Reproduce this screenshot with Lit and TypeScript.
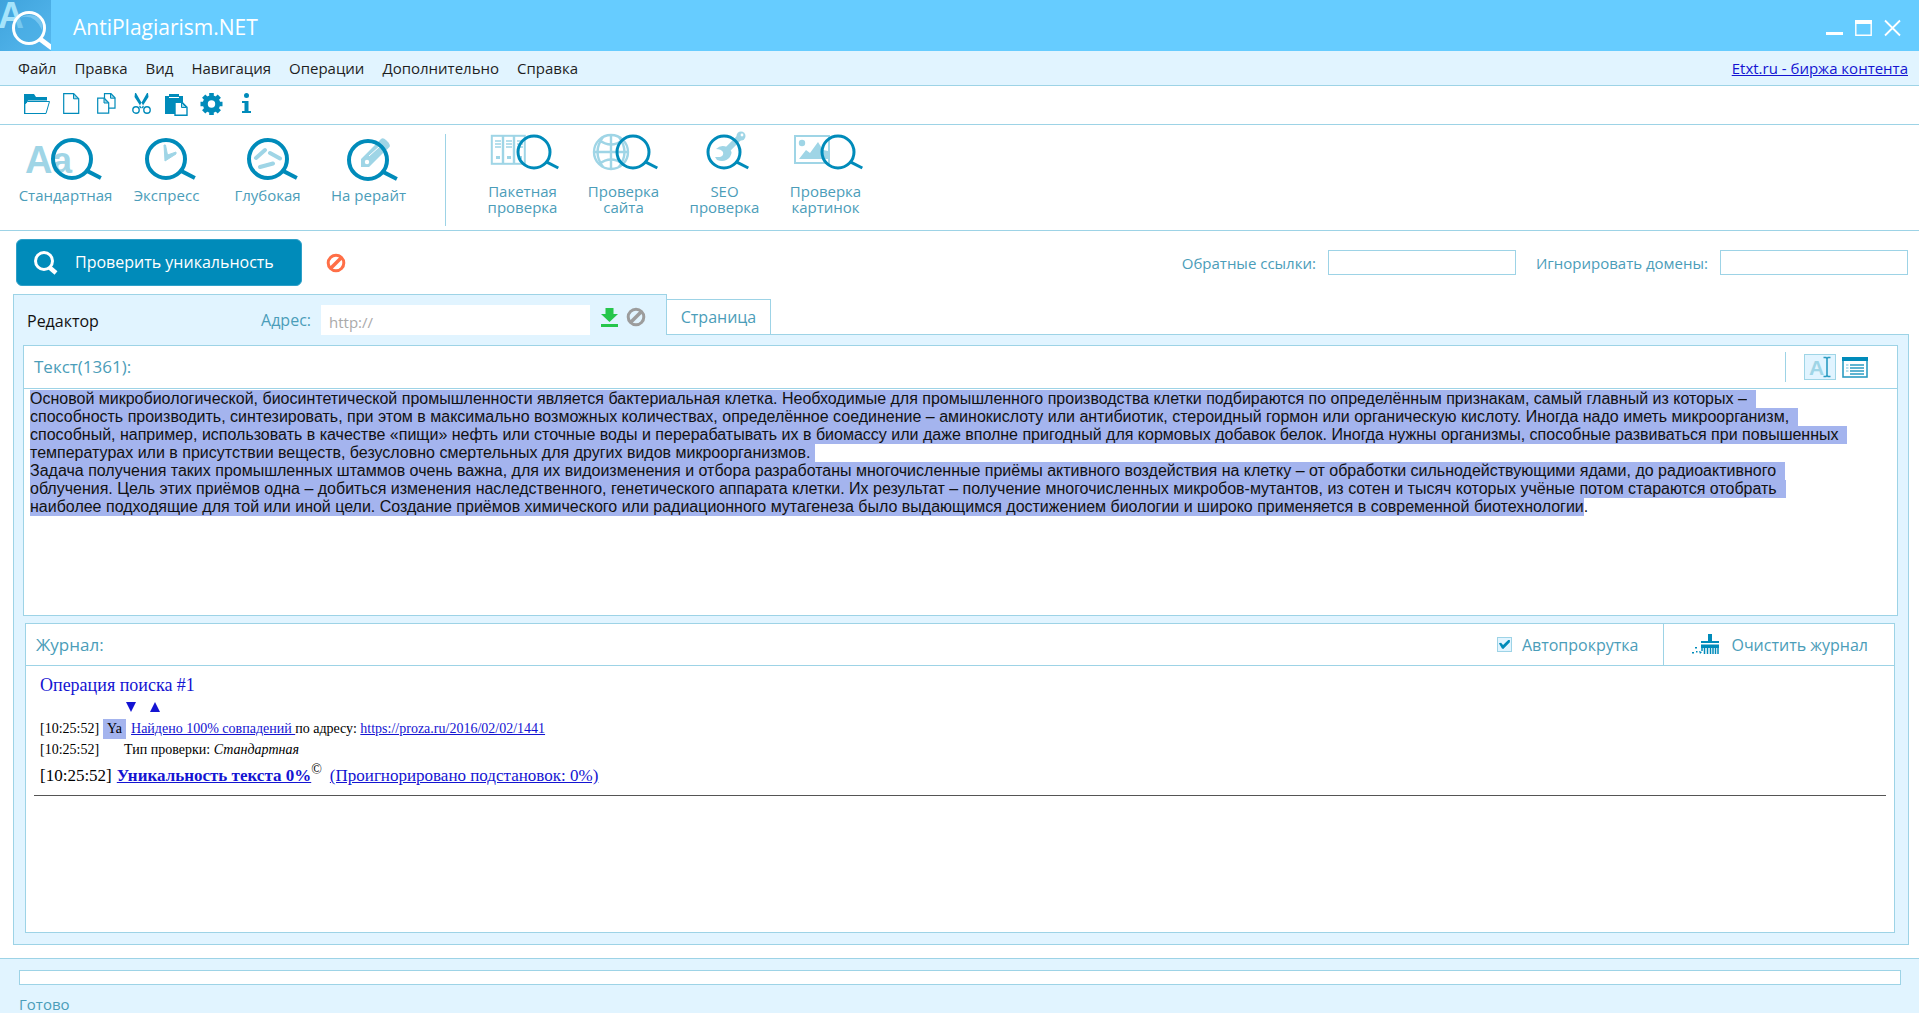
import { LitElement, html, css, svg, TemplateResult } from "lit";
import { customElement, query, state } from "lit/decorators.js";

const DEEP = "#008bba";
const PALE = "#9fd5e6";

const MENU = ["Файл", "Правка", "Вид", "Навигация", "Операции", "Дополнительно", "Справка"];

const smallIcon = (label: string, width: number, body: TemplateResult) => ({ label, width, body });

const TOOLS = [
  smallIcon("Открыть", 26, svg`
    <path d="M0 1h10l2 3h11v3.500H4L0 19z" fill=${DEEP}/>
    <path d="M3.500 8.500h22l-3.500 12H.7v-9z" fill="#fff" stroke=${DEEP}/>
    <path d="M0 1h1.200v19.900H0z" fill=${DEEP}/>`),
  smallIcon("Новый", 17, svg`
    <path d="M.7 .7h10l5 5v14.600H.7z" fill="#fff" stroke=${DEEP} stroke-width="1.200"/>
    <path d="M10.500 .8v5h5z" fill=${PALE} stroke=${DEEP}/>`),
  smallIcon("Копировать", 19, svg`
    <path d="M7.500 .7h6.500l4 4v10.500h-10.500z" fill="#fff" stroke=${DEEP} stroke-width="1.200"/>
    <path d="M13.500 .7v4.500h4.500z" fill=${PALE} stroke=${DEEP}/>
    <path d="M.7 5.200h6.500l4.500 4.500v10.500h-11z" fill="#fff" stroke=${DEEP} stroke-width="1.200"/>
    <path d="M7 5.500v4.500h4.500z" fill=${PALE} stroke=${DEEP}/>`),
  smallIcon("Вырезать", 19, svg`
    <path d="M3 0l1 0 8 14-2 1.500L2.500 4zM16 0l-1 0-8 14 2 1.500L16.500 4z" fill=${DEEP}/>
    <circle cx="4" cy="17" r="3.200" fill="#fff" stroke=${DEEP} stroke-width="1.400"/>
    <circle cx="15" cy="17" r="3.200" fill="#fff" stroke=${DEEP} stroke-width="1.400"/>`),
  smallIcon("Вставить", 23, svg`
    <path d="M0 3h4V1h10v2h4v6h-8v12H0z" fill=${DEEP}/>
    <path d="M4 4.500h10" stroke="#fff"/>
    <path d="M10 9.200h7l5 5v8H10z" fill="#fff" stroke=${DEEP} stroke-width="1.400"/>
    <path d="M16.500 9.500v5h5z" fill=${PALE} stroke=${DEEP}/>`),
  smallIcon("Настройки", 23, svg`
    <circle cx="11.500" cy="11" r="6.200" fill="none" stroke=${DEEP} stroke-width="5"/>
    <g stroke=${DEEP} stroke-width="4.600">
      <path d="M11.500 0v3M11.500 19v3M.5 11h3M19.500 11h3M3.700 3.200l2.300 2.300M17 16.500l2.300 2.300M3.700 18.800L6 16.500M17 5.500l2.300-2.300"/>
    </g>`),
  smallIcon("Информация", 9, svg`
    <circle cx="4.500" cy="2.500" r="2.500" fill=${DEEP}/>
    <path d="M0 8h6.500v10H9v2H0v-2h2.500v-8H0z" fill=${DEEP}/>`),
];

const lens = (cx: number, cy: number, r: number, w: number) => svg`
  <circle cx=${cx} cy=${cy} r=${r} fill="none" stroke=${DEEP} stroke-width=${w}/>
  <path d="M${cx + r * 0.74} ${cy + r * 0.6}L${cx + r * 1.52} ${cy + r}" stroke=${DEEP} stroke-width=${w} fill="none"/>`;

const MODES = [
  { label: "Стандартная", body: svg`
    <text x="-1" y="35" font-family="Liberation Sans, sans-serif" font-weight="700" font-size="38" fill=${PALE}>A</text>
    <text x="26" y="35" font-family="Liberation Sans, sans-serif" font-weight="700" font-size="36" fill=${PALE}>a</text>
    ${lens(46, 21, 19, 4)}` },
  { label: "Экспресс", body: svg`
    <path d="M37 7h1.500l2 10 8.500-3v2L38 23z" fill=${PALE} stroke=${PALE}/>${lens(39, 21, 19, 4)}` },
  { label: "Глубокая", body: svg`
    <path d="M28 20l9-8M42 15l10 5.500M32 29l13-3.500" stroke=${PALE} stroke-width="4" stroke-linecap="round"/>${lens(40, 21, 19, 4)}` },
  { label: "На рерайт", body: svg`
    <path d="M32 21L47 6l8 8-15 15h-8zM49 4l3-3q2-2 5 1l2.500 2.500Q62 8 60 9.500L57 12.500z" fill=${PALE}/>
    <circle cx="38" cy="24" r="2.200" fill="#fff"/><path d="M40 18L50 9" stroke="#fff"/>${lens(39, 22, 19, 4)}` },
];

const CHECKS = [
  { label: ["Пакетная", "проверка"], body: svg`
    <rect x="8.800" y="4.800" width="33" height="28" fill="#fff" stroke=${PALE} stroke-width="2"/>
    <path d="M20 5v28M31 5v28" stroke=${PALE} stroke-width="2.400"/>
    <path d="M12 10h6M12 13h6M12 16h6M23 10h6M23 13h6M23 16h6M34 10h6M34 13h6M34 16h6" stroke=${PALE} stroke-width="1.400"/>
    <path d="M13 25h4v3h-4zM24 25h4v3h-4zM35 25h4v3h-4z" fill=${PALE}/>${lens(51, 21, 16, 3)}` },
  { label: ["Проверка", "сайта"], body: svg`
    <g fill="none" stroke=${PALE} stroke-width="2.400">
      <circle cx="27" cy="21" r="17"/><path d="M27 4v34M10 21h34" />
      <path d="M15 9q12 9 24 0M15 33q12-9 24 0M19 6Q8 21 19 36M35 6q11 15 0 30"/>
    </g>${lens(49, 21, 16, 3)}` },
  { label: ["SEO", "проверка"], body: svg`
    <path d="M31 18q5-5 11-2 7 4 3 10-5 6-13 3l-2-3 5 0q4-1 3-5-2-3-7-3z" fill=${PALE}/>
    <path d="M43 18L54 7" stroke=${PALE} stroke-width="6"/>
    <circle cx="56" cy="5" r="4.500" fill=${PALE}/><circle cx="57" cy="4" r="1.400" fill="#fff"/>${lens(39, 21, 16, 3)}` },
  { label: ["Проверка", "картинок"], body: svg`
    <rect x="9" y="5" width="34" height="27" fill="#fff" stroke=${PALE} stroke-width="2"/>
    <circle cx="16" cy="12" r="3.200" fill=${PALE}/>
    <path d="M13 28l7-9 4 3 8-11 5 8 5 1v8z" fill=${PALE}/>${lens(52, 21, 16, 3)}` },
];

const stopIcon = (color: string) => html`
  <svg width="20" height="20" viewBox="0 0 20 20" aria-hidden="true">
    <circle cx="10" cy="10" r="7.800" fill="none" stroke=${color} stroke-width="3"/>
    <path d="M4.500 15.500l11-11" stroke=${color} stroke-width="3.600"/>
  </svg>`;

@customElement("app-root")
export class AppRoot extends LitElement {
  static styles = css`
    :host {
      --line: #9dd3e6;
      --soft: #e1f4ff;
      --ink: #4b9db9;
      --deep: #008bba;
      display: flex;
      flex-direction: column;
      min-height: 100vh;
      background: #fff;
      color: var(--ink);
      font: 15px/20px "Open Sans", "Noto Sans", sans-serif;
    }
    *, *::before, *::after { box-sizing: border-box; }
    svg { display: block; flex: none; overflow: visible; }
    button {
      padding: 0;
      border: 0;
      background: none;
      color: inherit;
      font: inherit;
      cursor: pointer;
    }
    input { font: inherit; border-radius: 0; outline: none; }
    .titlebar {
      display: flex;
      align-items: center;
      height: 51px;
      padding-right: 18px;
      background: #66ccff;
      color: #fff;
    }
    .logo { overflow: hidden; }
    .title { flex: 1; margin: 0; padding: 2px 0 0 22px; font-size: 21px; font-weight: 400; line-height: 28px; }
    .window { display: flex; gap: 12px; padding-top: 6px; }
    .menubar {
      display: flex;
      align-items: center;
      justify-content: space-between;
      height: 35px;
      padding: 0 11px 0 18px;
      background: var(--soft);
      border-bottom: 1px solid var(--line);
    }
    .menu { display: flex; gap: 18px; color: #1e1e1e; font-size: 15px; }
    .promo { color: #1414d2; font-size: 15px; }
    .tools {
      display: grid;
      grid-template-columns: repeat(7, 35px);
      place-items: center;
      height: 39px;
      padding: 0 19px 2px;
      border-bottom: 1px solid var(--line);
    }
    .modes {
      display: flex;
      height: 106px;
      padding: 9px 15px 4px;
      border-bottom: 1px solid var(--line);
    }
    .group { display: grid; grid-template-columns: repeat(4, 101px); align-items: start; }
    .group.first { padding-right: 26px; border-right: 1px solid var(--line); box-sizing: content-box; padding-top: 4px; height: 88px; }
    .group.second { padding-left: 26px; }
    .mode { display: flex; flex-direction: column; align-items: center; font-size: 15px; white-space: nowrap; }
    .mode.tall { gap: 3px; line-height: 20px; }
    .mode.low { gap: 12px; line-height: 16px; }
    .action {
      display: flex;
      align-items: center;
      padding: 8px 11px 8px 16px;
    }
    .check {
      display: flex;
      align-items: center;
      gap: 17px;
      width: 286px;
      height: 47px;
      padding: 0 17px 1px;
      border: 1px solid #2ea0c8;
      border-radius: 6px;
      background: var(--deep);
      color: #fff;
      font-size: 16px;
      white-space: nowrap;
    }
    .cancel { margin-left: 24px; }
    .filters { display: flex; align-items: center; gap: 20px; margin-left: auto; }
    .field { display: flex; align-items: center; gap: 12px; }
    .box { width: 188px; height: 25px; border: 1px solid var(--line); background: #fff; padding: 0 4px; }
    .workspace { display: flex; flex-direction: column; flex: 1; padding: 0 10px 13px 13px; }
    .tabs { display: flex; align-items: flex-end; height: 41px; }
    .tab-editor {
      display: flex;
      align-items: center;
      align-self: stretch;
      width: 654px;
      padding: 0 20px 0 13px;
      background: var(--soft);
      border: 1px solid var(--line);
      border-bottom: 0;
      font-size: 16px;
    }
    .tab-name { color: #111; font-size: 16px; padding-top: 11px; }
    .address { display: flex; align-items: center; align-self: stretch; gap: 10px; margin: 10px 0 0 auto; }
    .url { width: 269px; height: 31px; border: 0; padding: 4px 8px 0; background: #fff; font-size: 15px; }
    .url::placeholder { color: #aaa; opacity: 1; }
    .address-tools { display: flex; gap: 7px; align-items: center; padding: 4px 0 0 11px; }
    .tab-page { height: 36px; width: 104px; border: 1px solid var(--line); border-left: 0; font-size: 16px; }
    .tab-rest { flex: 1; border-bottom: 1px solid var(--line); }
    .sheet {
      display: flex;
      flex-direction: column;
      flex: 1;
      gap: 7px;
      padding: 10px 10px 10px 9px;
      background: var(--soft);
      border: 1px solid var(--line);
      border-top: 0;
    }
    .panel { display: flex; flex-direction: column; background: #fff; border: 1px solid var(--line); }
    .panel-head {
      display: flex;
      align-items: center;
      height: 43px;
      border-bottom: 1px solid var(--line);
      font-size: 16px;
    }
    .journal .panel-head { height: 42px; }
    .panel-title { margin: 0 auto 0 10px; font-size: 17px; font-weight: 400; }
    .views { display: flex; align-items: center; gap: 6px; height: 30px; padding: 0 29px 0 18px; border-left: 1px solid var(--line); }
    .editor {
      display: block;
      width: 100%;
      height: 226px;
      margin: 0;
      padding: 1px 57px 1px 6px;
      border: 0;
      outline: none;
      resize: none;
      background: #fff;
      color: #111;
      font: 16px/18px "Liberation Sans", Arial, sans-serif;
    }
    .editor::selection { background: #a4b4ee; color: #111; }
    .journal { flex: 1; margin: 0 3px 1px 2px; }
    .auto { display: flex; align-items: center; gap: 10px; padding-right: 25px; }
    .tick {
      appearance: none;
      width: 15px;
      height: 15px;
      margin: 0;
      border: 1px solid var(--line);
      background: var(--soft);
      display: grid;
      place-items: center;
    }
    .tick:checked::before {
      content: "";
      width: 11px;
      height: 9px;
      background: var(--deep);
      clip-path: polygon(0 35%, 20% 30%, 38% 55%, 85% 0, 100% 0, 100% 25%, 40% 100%, 28% 95%);
    }
    .clear { display: flex; align-items: center; gap: 12px; align-self: stretch; padding: 0 26px 0 28px; border-left: 1px solid var(--line); font-size: 16px; }
    .log { padding: 8px; color: #000; font: 14px/21px "Liberation Serif", "Times New Roman", serif; }
    .log-body { display: flex; flex-direction: column; padding: 0 6px; }
    .log a { color: #1414d2; }
    .op { color: #1414d2; font-size: 18px; line-height: 22px; }
    .arrows { display: flex; gap: 14px; padding-left: 86px; height: 22px; align-items: center; }
    .row { white-space: pre; display: flex; align-items: baseline; height: 21px; }
    .row.main { font-size: 17px; height: 31px; line-height: 31px; }
    .ya { background: #a4b4ee; padding: 0 4px; margin: 0 5px 0 4px; line-height: 20px; }
    .kind { padding-left: 25px; }
    .main a:first-of-type { font-weight: 700; margin-left: 5px; }
    .main sup { font-size: 14px; line-height: 14px; align-self: flex-start; margin-top: 3px; vertical-align: baseline; }
    .main a:last-of-type { margin-left: 8px; }
    .rule { margin: 4px 0 0; border: 0; border-top: 1px solid #555; }
    .status { border-top: 1px solid var(--line); background: var(--soft); padding: 11px 18px 0 19px; height: 55px; overflow: hidden; }
    .progress { height: 15px; border: 1px solid var(--line); background: #fff; }
    .ready { padding-top: 9px; }
  `;

  @query(".editor") private editor!: HTMLTextAreaElement;
  @state() private autoscroll = true;

  firstUpdated() {
    this.editor.focus();
    this.editor.setSelectionRange(0, this.editor.value.length - 1);
  }

  render() {
    return html`
      <header class="titlebar">
        <svg class="logo" width="51" height="51" viewBox="0 0 51 51" aria-hidden="true">
          <defs>
            <linearGradient id="tile" x1="0" y1="0" x2="1" y2="1">
              <stop offset="0" stop-color="#3fa3dc"/><stop offset="1" stop-color="#56b8ee"/>
            </linearGradient>
          </defs>
          <rect width="51" height="51" fill="url(#tile)"/>
          <text x="-2" y="28" font-family="Liberation Sans, sans-serif" font-size="36" font-weight="700" fill="#a5e4fb">A</text>
          <circle cx="29" cy="28" r="15.500" fill="#4aaee4" fill-opacity=".5" stroke="#fff" stroke-width="3"/>
          <path d="M20 18q14-5 22 12q2-14-12-15-6 0-10 3z" fill="#8ad0f5" opacity=".7"/>
          <path d="M40 39l12 9" stroke="#fff" stroke-width="5"/>
        </svg>
        <h1 class="title">AntiPlagiarism.NET</h1>
        <div class="window">
          <button aria-label="Свернуть"><svg width="17" height="17"><path d="M0 13.500h17" stroke="#fff" stroke-width="3"/></svg></button>
          <button aria-label="Развернуть"><svg width="17" height="17"><path d="M.8 1v14.200h15.400V1" fill="none" stroke="#fff" stroke-width="1.400"/><path d="M0 2h17" stroke="#fff" stroke-width="4"/></svg></button>
          <button aria-label="Закрыть"><svg width="17" height="17"><path d="M1 .5l15 15M16 .5l-15 15" stroke="#fff" stroke-width="1.800"/></svg></button>
        </div>
      </header>

      <nav class="menubar">
        <div class="menu">${MENU.map((m) => html`<button>${m}</button>`)}</div>
        <a class="promo" href="#etxt">Etxt.ru - биржа контента</a>
      </nav>

      <div class="tools">
        ${TOOLS.map((t) => html`
          <button aria-label=${t.label}><svg width=${t.width} height="22" aria-hidden="true">${t.body}</svg></button>`)}
      </div>

      <div class="modes">
        <div class="group first">
          ${MODES.map((m) => html`
            <button class="mode tall"><svg width="80" height="44" aria-hidden="true">${m.body}</svg>${m.label}</button>`)}
        </div>
        <div class="group second">
          ${CHECKS.map((c) => html`
            <button class="mode low"><svg width="80" height="37" viewBox="0 3 80 37" aria-hidden="true">${c.body}</svg><span>${c.label[0]}<br>${c.label[1]}</span></button>`)}
        </div>
      </div>

      <div class="action">
        <button class="check">
          <svg width="24" height="24" aria-hidden="true">
            <circle cx="10" cy="11" r="8.500" fill="none" stroke="#fff" stroke-width="3"/>
            <path d="M15 17l7 6" stroke="#fff" stroke-width="4.500"/>
          </svg>
          Проверить уникальность
        </button>
        <button class="cancel" aria-label="Остановить">${stopIcon("#ff6f47")}</button>
        <div class="filters">
          <label class="field">Обратные ссылки:<input class="box" type="text"></label>
          <label class="field">Игнорировать домены:<input class="box" type="text"></label>
        </div>
      </div>

      <main class="workspace">
        <div class="tabs">
          <div class="tab-editor">
            <button class="tab-name">Редактор</button>
            <div class="address">
              <label for="url">Адрес:</label>
              <input id="url" class="url" type="text" placeholder="http://">
            </div>
            <div class="address-tools">
              <button aria-label="Загрузить"><svg width="18" height="19"><path d="M4.500 0h8v6H17l-8.500 8L0 6h4.500zM0 16h17v3H0z" fill="#26c64b"/></svg></button>
              <button aria-label="Отменить загрузку">${stopIcon("#9c9c9c")}</button>
            </div>
          </div>
          <button class="tab-page">Страница</button>
          <div class="tab-rest"></div>
        </div>

        <div class="sheet">
          <section class="panel">
            <div class="panel-head">
              <h2 class="panel-title">Текст(1361):</h2>
              <div class="views">
                <button aria-label="Режим текста">
                  <svg width="32" height="26" aria-hidden="true">
                    <rect x=".5" y=".5" width="31" height="25" fill="#e1f4ff" stroke=${PALE}/>
                    <text x="5" y="21" font-family="Liberation Sans, sans-serif" font-weight="700" font-size="21" fill=${PALE}>A</text>
                    <path d="M19.500 3.500h2.500l1 1 1-1h2.500M19.500 22.500h2.500l1-1 1 1h2.500M23 4v18" fill="none" stroke="#2b9cc2" stroke-width="1.600"/>
                  </svg>
                </button>
                <button aria-label="Режим списка">
                  <svg width="26" height="21" aria-hidden="true">
                    <rect x="1" y="1" width="24" height="19" fill="#fff" stroke="#2b9cc2" stroke-width="1.600"/>
                    <path d="M0 0h26v4H0z" fill=${DEEP}/>
                    <path d="M8 8h14M8 11h14M8 14h14M8 17h14" stroke="#2b9cc2" stroke-width="1.500"/>
                    <path d="M4 8h2.500M4 11h2.500M4 14h2.500" stroke=${PALE} stroke-width="1.500"/>
                  </svg>
                </button>
              </div>
            </div>
            <textarea class="editor" aria-label="Текст" spellcheck="false">
Основой микробиологической, биосинтетической промышленности является бактериальная клетка. Необходимые для промышленного производства клетки подбираются по определённым признакам, самый главный из которых – способность производить, синтезировать, при этом в максимально возможных количествах, определённое соединение – аминокислоту или антибиотик, стероидный гормон или органическую кислоту. Иногда надо иметь микроорганизм, способный, например, использовать в качестве «пищи» нефть или сточные воды и перерабатывать их в биомассу или даже вполне пригодный для кормовых добавок белок. Иногда нужны организмы, способные развиваться при повышенных температурах или в присутствии веществ, безусловно смертельных для других видов микроорганизмов.
Задача получения таких промышленных штаммов очень важна, для их видоизменения и отбора разработаны многочисленные приёмы активного воздействия на клетку – от обработки сильнодействующими ядами, до радиоактивного облучения. Цель этих приёмов одна – добиться изменения наследственного, генетического аппарата клетки. Их результат – получение многочисленных микробов-мутантов, из сотен и тысяч которых учёные потом стараются отобрать наиболее подходящие для той или иной цели. Создание приёмов химического или радиационного мутагенеза было выдающимся достижением биологии и широко применяется в современной биотехнологии.</textarea>
          </section>

          <section class="panel journal">
            <div class="panel-head">
              <h2 class="panel-title">Журнал:</h2>
              <label class="auto">
                <input class="tick" type="checkbox" .checked=${this.autoscroll}
                  @change=${(e: Event) => (this.autoscroll = (e.target as HTMLInputElement).checked)}>
                Автопрокрутка
              </label>
              <button class="clear">
                <svg width="27" height="21" aria-hidden="true">
                  <path d="M16 0h4v7h7v2H9V7h7zM9 10.500h18v3.500H9z" fill=${DEEP}/>
                  <path d="M10 14v3M12.500 14v6M15.500 14v6M18.500 14v6M21 14v6M23.500 14v6M26 14v6" stroke=${DEEP} stroke-width="1.500"/>
                  <path d="M7 17l3 1-2 2zM3 13h2v1.500H3zM0 18h2v1.500H0zM4 17h1.500v1.500H4z" fill=${DEEP}/>
                </svg>
                Очистить журнал
              </button>
            </div>
            <div class="log">
              <div class="log-body">
                <div class="op">Операция поиска #1</div>
                <div class="arrows">
                  <svg width="10" height="10"><path d="M0 0h10L5 10z" fill="#1414d2"/></svg>
                  <svg width="10" height="10"><path d="M0 10h10L5 0z" fill="#1414d2"/></svg>
                </div>
                <div class="row"><span>[10:25:52]</span><span class="ya">Ya</span><a href="#found">Найдено 100% совпадений </a><span>по адресу: </span><a href="https://proza.ru/2016/02/02/1441">https://proza.ru/2016/02/02/1441</a></div>
                <div class="row"><span>[10:25:52]</span><span class="kind">Тип проверки: <i>Стандартная</i></span></div>
                <div class="row main"><span>[10:25:52]</span><a href="#unique">Уникальность текста 0%</a><sup>©</sup><a href="#ignored">(Проигнорировано подстановок: 0%)</a></div>
              </div>
              <hr class="rule">
            </div>
          </section>
        </div>
      </main>

      <footer class="status">
        <div class="progress" role="progressbar" aria-label="Ход проверки" aria-valuenow="0"></div>
        <div class="ready">Готово</div>
      </footer>
    `;
  }
}
